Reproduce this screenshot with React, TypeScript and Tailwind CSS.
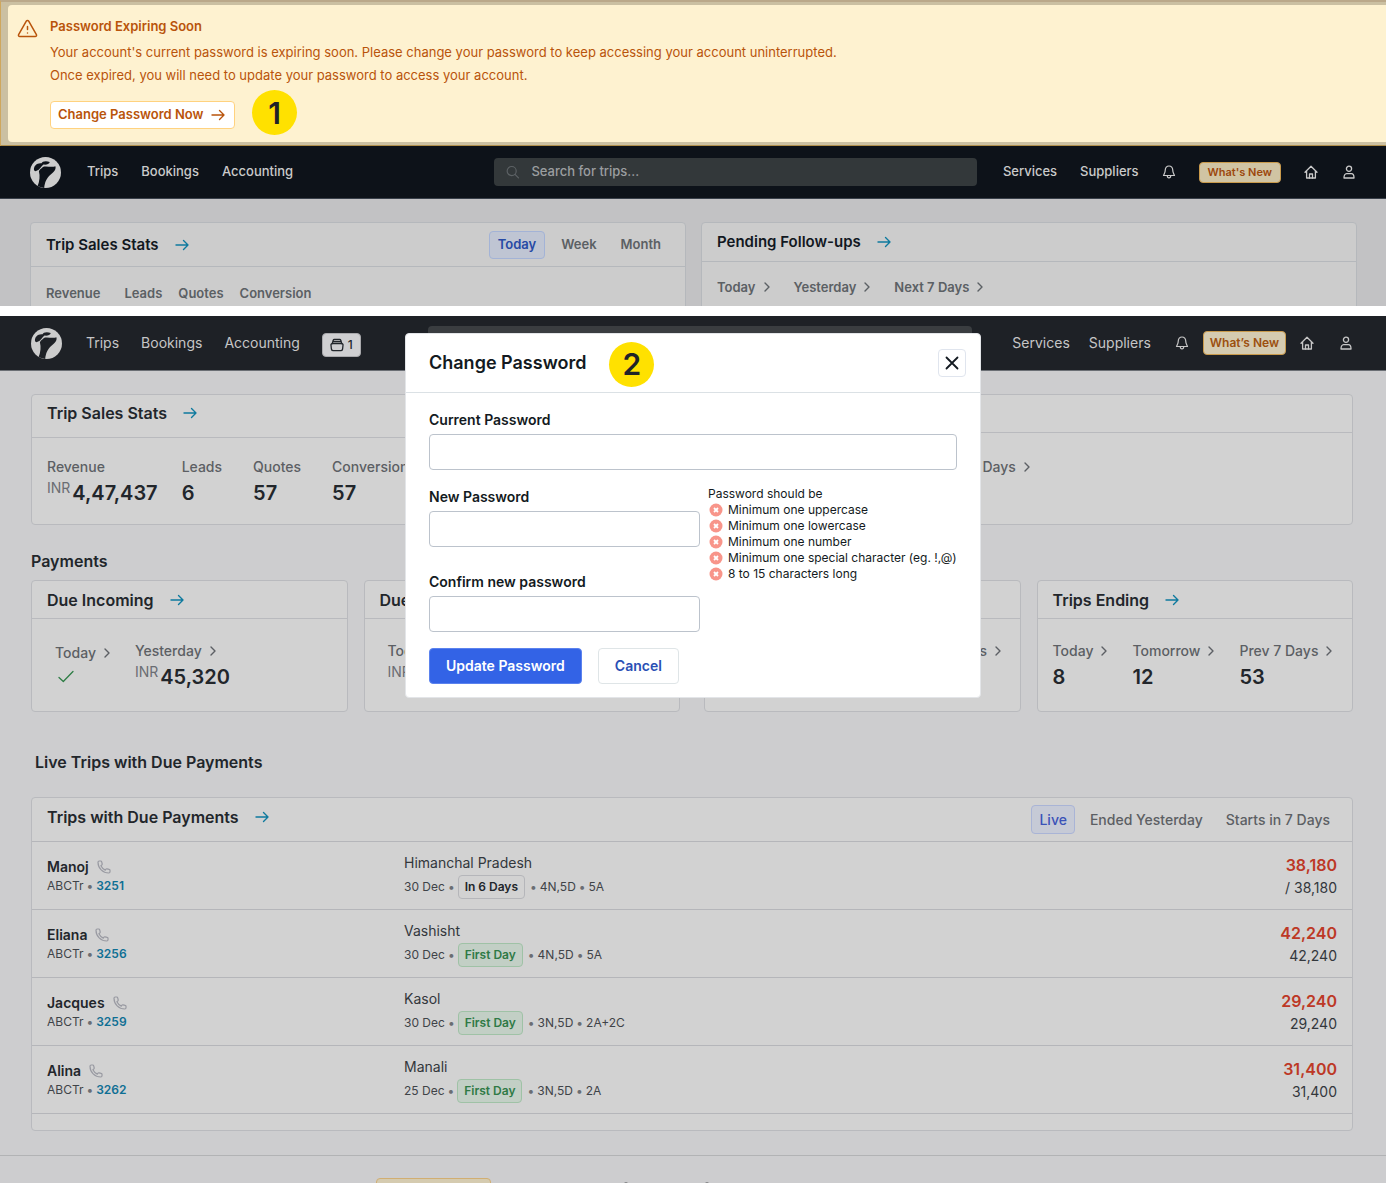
import type { ReactNode } from "react";

function Arrow({ className = "text-[#0e7a9e]" }: { className?: string }) {
  return (
    <svg width="18" height="18" viewBox="0 0 18 18" fill="none" stroke="currentColor" strokeWidth="1.4" strokeLinecap="round" strokeLinejoin="round" className={className} aria-hidden="true">
      <path d="M3 9h12M10.500 4.500 15 9l-4.500 4.500" />
    </svg>
  );
}

function Chevron() {
  return (
    <svg width="10" height="12" viewBox="0 0 10 12" fill="none" stroke="currentColor" strokeWidth="1.4" strokeLinecap="round" strokeLinejoin="round" aria-hidden="true">
      <path d="M3 2l4 4-4 4" />
    </svg>
  );
}

function Logo({ cut }: { cut: string }) {
  return (
    <svg width="31" height="31" viewBox="0 0 94 94" aria-label="Home">
      <circle cx="47" cy="47" r="47" fill="#cccccc" />
      <path fill={cut} d="M12 39C11 26 22 17 35 19C37 13 48 11 60 15C58 22 50 24 41 23C34 28 30 40 17 43C15 43 12 42 12 39Z" />
      <path fill={cut} d="M27 43C30 36 36 34 39 30C50 26 66 33 77 28C80 38 72 45 62 54C50 65 45 76 43 94L23 89C29 72 31 58 27 43Z" />
    </svg>
  );
}

function Bell() {
  return (
    <svg width="14" height="14" viewBox="0 0 14 14" fill="none" stroke="currentColor" strokeWidth="1.2" strokeLinecap="round" strokeLinejoin="round" aria-hidden="true">
      <path d="M7 1C4.700 1 3.300 2.700 3.300 4.800C3.300 7.600 2.300 8.700 1.500 10.500H12.500C11.700 8.700 10.700 7.600 10.700 4.800C10.700 2.700 9.300 1 7 1Z" />
      <path d="M5.300 10.800c0 2.800 3.400 2.800 3.400 0" />
    </svg>
  );
}

function House() {
  return (
    <svg width="14" height="14" viewBox="0 0 14 14" fill="none" stroke="currentColor" strokeWidth="1.3" strokeLinecap="round" strokeLinejoin="round" aria-hidden="true">
      <path d="M1 7.300 7 1.300l6 6M2.600 6v7h8.800V6" />
      <path d="M5.500 13V9h3v4" />
    </svg>
  );
}

function Person() {
  return (
    <svg width="14" height="14" viewBox="0 0 14 14" fill="none" stroke="currentColor" strokeWidth="1.3" strokeLinejoin="round" aria-hidden="true">
      <circle cx="7" cy="3.800" r="2.600" />
      <path d="M4.600 8.600h4.800c1.500 0 2.600 2 2.600 4.400H2c0-2.400 1.100-4.400 2.600-4.400Z" />
    </svg>
  );
}

function Phone() {
  return (
    <svg width="14" height="14" viewBox="0 0 14 14" fill="none" stroke="#999aa2" strokeWidth="1.200" strokeLinejoin="round" aria-hidden="true">
      <path d="M1 2.200C1 1.500 1.500 1 2.200 1H3.700C4.200 1 4.600 1.300 4.700 1.800L5.200 4C5.300 4.400 5.200 4.800 4.800 5L3.900 5.700C4.800 7.600 6.400 9.200 8.300 10.100L9 9.200C9.200 8.800 9.600 8.700 10 8.800L12.200 9.300C12.700 9.400 13 9.800 13 10.300V11.800C13 12.500 12.500 13 11.800 13C5.800 13 1 8.200 1 2.200Z" />
    </svg>
  );
}

function CardTitle({ children, small }: { children: ReactNode; small?: boolean }) {
  return (
    <a href="#" className="flex items-center gap-3.5">
      <h3 className={small ? "text-[15px] leading-6 font-semibold whitespace-nowrap" : "text-base leading-6 font-semibold whitespace-nowrap"}>{children}</h3>
      <Arrow />
    </a>
  );
}

function Period({ label, children, small }: { label: string; children?: ReactNode; small?: boolean }) {
  return (
    <div className="shrink-0">
      <a href="#" className={small ? "flex items-center gap-1.5 text-[13px] leading-5 font-semibold whitespace-nowrap text-[#5b6064]" : "flex items-center gap-1.5 text-sm leading-5 font-medium whitespace-nowrap text-[#5c5f64]"}>
        {label}
        <Chevron />
      </a>
      {children}
    </div>
  );
}

function Figure({ children, currency }: { children: ReactNode; currency?: boolean }) {
  return (
    <div className="flex gap-0.5 whitespace-nowrap text-[#22262b]">
      {currency && <span className="text-sm leading-[22px] font-normal text-[#6a6d73]">INR</span>}
      <span className="text-xl leading-8 font-semibold">{children}</span>
    </div>
  );
}

function Badge({ children }: { children: ReactNode }) {
  return <span className="flex size-[45px] items-center justify-center rounded-full bg-[#ffe100] text-3xl leading-none font-semibold text-[#1f2328]">{children}</span>;
}

function Dot() {
  return <span className="text-[#6a6d73]">•</span>;
}

function PaymentCard({ title, children, inset }: { title: string; children: ReactNode; inset?: boolean }) {
  return (
    <section className="flex h-[132px] min-w-0 flex-1 flex-col overflow-hidden rounded border border-[#b9babe] bg-[#d2d2d2]">
      <header className="flex h-[38px] items-center border-b border-[#b9babe] px-[15px]">
        <CardTitle>{title}</CardTitle>
      </header>
      <div className={inset ? "flex gap-[23px] px-[23px] pt-[22px]" : "flex gap-[23px] px-[15px] pt-[22px]"}>{children}</div>
    </section>
  );
}

function NoticeScreen() {
  return (
    <section className="h-[306px] overflow-hidden bg-[#c2c2c4] text-[#12181f]">
      <div role="alert" className="h-[146px] border-t-2 border-b border-l border-t-[#bba98a] border-b-[#b08f4c] border-l-[#cfa75d] bg-[#cbc0a2] pt-[3px] pl-[7px]">
        <div className="flex h-[137px] gap-3 rounded-l bg-[#fef2d0] pt-[9px] pl-[9px] text-[#b9540b]">
          <svg width="21" height="21" viewBox="0 0 21 21" fill="none" stroke="currentColor" strokeWidth="1.500" strokeLinecap="round" strokeLinejoin="round" className="mt-1 shrink-0" aria-hidden="true">
            <path d="M9.300 3.200 1.600 16.600c-.5.900.1 2 1.200 2h15.400c1.100 0 1.700-1.100 1.200-2L11.700 3.200c-.5-.900-1.900-.900-2.400 0Z" />
            <path d="M10.500 8.500v3M10.500 15v.1" />
          </svg>
          <div>
            <h2 className="text-[13px] leading-6 font-semibold">Password Expiring Soon</h2>
            <p className="mt-[3px] text-[13px] leading-[23px]">
              Your account's current password is expiring soon. Please change your password to keep accessing your account uninterrupted.
              <br />
              Once expired, you will need to update your password to access your account.
            </p>
            <div className="relative mt-3.5 w-fit">
              <button className="flex h-7 items-center gap-1.5 rounded border border-[#ffd27f] bg-white px-[7px] text-[13px] font-semibold whitespace-nowrap">
                Change Password Now
                <Arrow className="text-[#b9540b]" />
              </button>
              <div className="absolute -top-[11px] left-[202px]">
                <Badge>1</Badge>
              </div>
            </div>
          </div>
        </div>
      </div>
      <nav className="flex h-[53px] items-center border-b border-[#39404a] bg-[#0d1219] pr-[30px] pl-[30px] text-[13px] font-medium text-[#cacaca]">
        <Logo cut="#0d1219" />
        <div className="ml-[26px] flex gap-[23px]">
          <a href="#">Trips</a>
          <a href="#">Bookings</a>
          <a href="#">Accounting</a>
        </div>
        <label className="ml-[201px] flex h-7 flex-1 items-center gap-3 rounded bg-[#33383a] px-3">
          <svg width="14" height="14" viewBox="0 0 14 14" fill="none" stroke="#5d6265" strokeWidth="1.200" strokeLinecap="round" aria-hidden="true">
            <circle cx="6" cy="6" r="4.800" />
            <path d="m9.500 9.500 3.700 3.700" />
          </svg>
          <input aria-label="Search for trips" placeholder="Search for trips..." className="w-full bg-transparent outline-none placeholder:text-[#9b9ea0]" />
        </label>
        <div className="ml-[26px] flex items-center">
          <a href="#">Services</a>
          <a href="#" className="ml-[23px]">Suppliers</a>
          <button aria-label="Notifications" className="ml-[23px]"><Bell /></button>
          <button className="ml-[23px] h-[21px] rounded border border-[#c99a4b] bg-[#d0c4a3] px-2 text-[11px] font-semibold whitespace-nowrap text-[#9c470c]">What's New</button>
          <button aria-label="Dashboard" className="ml-[23px]"><House /></button>
          <button aria-label="Account" className="ml-6"><Person /></button>
        </div>
      </nav>
      <main className="grid grid-cols-2 items-start gap-[15px] pt-[23px] pr-[29px] pl-[30px]">
        <section className="h-[120px] rounded border border-[#b5b8bc] bg-[#cccccc]">
          <header className="flex h-11 items-center justify-between border-b border-[#b5b8bc] pr-4 pl-[15px]">
            <CardTitle small>Trip Sales Stats</CardTitle>
            <div className="flex gap-2 text-[13px] font-semibold text-[#5b6064]">
              <button className="h-7 rounded border border-[#a3b3d6] bg-[#bfc5d3] px-2 text-[#274aa5]">Today</button>
              <button className="h-7 px-2">Week</button>
              <button className="h-7 px-2">Month</button>
            </div>
          </header>
          <div className="flex px-[15px] pt-4 text-[13px] leading-5 font-semibold text-[#5b6064]">
            <span>Revenue</span>
            <span className="ml-6">Leads</span>
            <span className="ml-4">Quotes</span>
            <span className="ml-4">Conversion</span>
          </div>
        </section>
        <section className="h-[120px] rounded border border-[#b5b8bc] bg-[#cccccc]">
          <header className="flex h-[39px] items-center border-b border-[#b5b8bc] px-[15px]">
            <CardTitle small>Pending Follow-ups</CardTitle>
          </header>
          <div className="flex gap-[22px] px-[15px] pt-[15px]">
            <Period small label="Today" />
            <Period small label="Yesterday" />
            <Period small label="Next 7 Days" />
          </div>
        </section>
      </main>
    </section>
  );
}

const rules = ["Minimum one uppercase", "Minimum one lowercase", "Minimum one number", "Minimum one special character (eg. !,@)", "8 to 15 characters long"];

const trips = [
  { name: "Manoj", id: "3251", place: "Himanchal Pradesh", date: "30 Dec", status: "In 6 Days", stay: "4N,5D", pax: "5A", due: "38,180", total: "/ 38,180" },
  { name: "Eliana", id: "3256", place: "Vashisht", date: "30 Dec", status: "First Day", stay: "4N,5D", pax: "5A", due: "42,240", total: "42,240" },
  { name: "Jacques", id: "3259", place: "Kasol", date: "30 Dec", status: "First Day", stay: "3N,5D", pax: "2A+2C", due: "29,240", total: "29,240" },
  { name: "Alina", id: "3262", place: "Manali", date: "25 Dec", status: "First Day", stay: "3N,5D", pax: "2A", due: "31,400", total: "31,400" },
];

function PasswordField({ id, label }: { id: string; label: string }) {
  return (
    <div>
      <label htmlFor={id} className="block pt-px text-sm leading-5 font-semibold">{label}</label>
      <input id={id} type="password" className="mt-1 block h-9 w-full rounded border border-[#bcc3cc] px-3 text-sm outline-none" />
    </div>
  );
}

function PasswordDialog() {
  return (
    <div role="dialog" aria-labelledby="dialog-title" className="absolute top-[17px] left-1/2 w-[576px] -translate-x-1/2 rounded border border-[#e3e5e8] bg-white text-[#131a21]">
      <header className="flex h-[59px] items-center border-b border-[#dbe1e5] pr-3.5 pl-[23px]">
        <h2 id="dialog-title" className="text-lg leading-6 font-semibold">Change Password</h2>
        <div className="ml-[23px] pt-0.5"><Badge>2</Badge></div>
        <button aria-label="Close" className="ml-auto flex size-7 items-center justify-center rounded border border-[#e0e5ee]">
          <svg width="14" height="14" viewBox="0 0 14 14" stroke="currentColor" strokeWidth="1.800" strokeLinecap="round" aria-hidden="true">
            <path d="m1.500 1.500 11 11M12.500 1.500l-11 11" />
          </svg>
        </button>
      </header>
      <form className="px-[23px] pt-4 pb-[13px]">
        <PasswordField id="current" label="Current Password" />
        <div className="mt-4 flex gap-2">
          <div className="w-[271px] shrink-0">
            <PasswordField id="new" label="New Password" />
            <div className="mt-6"><PasswordField id="confirm" label="Confirm new password" /></div>
          </div>
          <div className="text-xs leading-4 whitespace-nowrap">
            <p>Password should be</p>
            <ul>
              {rules.map((rule) => (
                <li key={rule} className="flex items-center gap-[5px] pl-px">
                  <svg width="14" height="14" viewBox="0 0 14 14" aria-hidden="true">
                    <circle cx="7" cy="7" r="6.500" fill="#f8958a" />
                    <path d="m5 5 4 4M9 5l-4 4" stroke="#fff" strokeWidth="1.800" />
                  </svg>
                  {rule}
                </li>
              ))}
            </ul>
          </div>
        </div>
        <div className="mt-4 flex gap-4 text-sm font-semibold">
          <button type="button" className="h-9 rounded border border-[#5b82ee] bg-[#3363e6] px-4 text-white">Update Password</button>
          <button type="button" className="h-9 rounded border border-[#dfe5e7] px-4 text-[#2a50b5]">Cancel</button>
        </div>
      </form>
    </div>
  );
}

function DialogScreen() {
  return (
    <section className="relative overflow-hidden bg-[#cdcdcf] text-[#22262b]">
      <nav className="flex h-[55px] items-center border-b border-[#6b6f75] bg-[#1e2126] pr-[33px] pl-[31px] text-sm text-[#c6c6c6]">
        <Logo cut="#1e2126" />
        <div className="ml-6 flex items-center gap-[22px]">
          <a href="#">Trips</a>
          <a href="#">Bookings</a>
          <a href="#">Accounting</a>
          <button aria-label="Saved trips, 1" className="mt-[3px] flex h-6 items-center gap-1 rounded border border-[#a9a9ac] bg-[#cfcfd1] px-[7px] text-xs font-medium text-[#22262b]">
            <svg width="14" height="14" viewBox="0 0 14 14" fill="none" stroke="currentColor" strokeWidth="1.300" strokeLinecap="round" strokeLinejoin="round" aria-hidden="true">
              <path d="M2.300 5.500 3.200 2.200c.2-.6.500-.9 1.100-.9h5.400c.6 0 .9.300 1.100.9l.9 3.300M3 3.500h8" />
              <path d="M2.600 5.500h8.800c1 0 1.800.8 1.600 1.800l-.4 3.700c-.2 1-.9 1.700-1.900 1.700H3.300c-1 0-1.700-.7-1.900-1.700L1 7.300c-.2-1 .6-1.800 1.600-1.800Z" />
            </svg>
            1
          </button>
        </div>
        <div className="ml-[67px] h-[34px] flex-1 rounded bg-[#3a3d40]" />
        <div className="ml-10 flex items-center">
          <a href="#">Services</a>
          <a href="#" className="ml-[19px]">Suppliers</a>
          <button aria-label="Notifications" className="ml-[24px]"><Bell /></button>
          <button className="ml-3.5 h-6 rounded border border-[#c99a4b] bg-[#d5cbb0] px-1.5 text-xs font-semibold whitespace-nowrap text-[#9c500f]">What’s New</button>
          <button aria-label="Dashboard" className="ml-3.5"><House /></button>
          <button aria-label="Account" className="ml-[25px]"><Person /></button>
        </div>
      </nav>
      <main className="pr-[33px] pl-[31px]">
        <div className="grid grid-cols-2 gap-6 pt-[23px]">
          <section className="h-[131px] rounded border border-[#b9babe] bg-[#d2d2d2]">
            <header className="flex h-[43px] items-center border-b border-[#b9babe] px-[15px] pb-1.5">
              <CardTitle>Trip Sales Stats</CardTitle>
            </header>
            <div className="flex px-[15px] pt-[19px] text-sm leading-5 font-medium text-[#5c5f64]">
              <div>Revenue<Figure currency>4,47,437</Figure></div>
              <div className="ml-6">Leads<Figure>6</Figure></div>
              <div className="ml-[31px]">Quotes<Figure>57</Figure></div>
              <div className="ml-[31px]">Conversion<Figure>57</Figure></div>
            </div>
          </section>
          <section className="h-[131px] rounded border border-[#b9babe] bg-[#d2d2d2]">
            <header className="flex h-[38px] items-center border-b border-[#b9babe] px-[15px]">
              <CardTitle>Pending Follow-ups</CardTitle>
            </header>
            <div className="flex gap-[38px] px-[15px] pt-6">
              <Period label="Today" />
              <Period label="Yesterday" />
              <Period label="Next 7 Days" />
            </div>
          </section>
        </div>
        <h2 className="mt-6 text-base leading-6 font-semibold">Payments</h2>
        <div className="mt-[7px] grid grid-cols-2 gap-6">
          <div className="flex gap-4">
            <PaymentCard title="Due Incoming" inset>
              <div className="pt-0.5">
                <Period label="Today">
                  <svg width="16" height="14" viewBox="0 0 16 14" fill="none" stroke="#2e7d45" strokeWidth="1.300" strokeLinecap="round" strokeLinejoin="round" className="mt-[7px] ml-[3px]" aria-hidden="true">
                    <path d="m1 7.500 4.300 4L15 1.500" />
                  </svg>
                </Period>
              </div>
              <Period label="Yesterday"><Figure currency>45,320</Figure></Period>
            </PaymentCard>
            <PaymentCard title="Due Outgoing" inset>
              <Period label="Today"><Figure currency>0</Figure></Period>
            </PaymentCard>
          </div>
          <div className="flex gap-4">
            <PaymentCard title="Trips Starting">
              <Period label="Today" />
              <Period label="Tomorrow" />
              <Period label="Next 7 Days" />
            </PaymentCard>
            <PaymentCard title="Trips Ending">
              <Period label="Today"><Figure>8</Figure></Period>
              <Period label="Tomorrow"><Figure>12</Figure></Period>
              <Period label="Prev 7 Days"><Figure>53</Figure></Period>
            </PaymentCard>
          </div>
        </div>
        <h2 className="mt-[38px] pl-1 text-base leading-6 font-semibold">Live Trips with Due Payments</h2>
        <section className="mt-[23px] rounded border border-[#b9babe] bg-[#d2d2d2] pb-4">
          <header className="flex h-11 items-center justify-between border-b border-[#b5b6ba] pr-3.5 pl-[15px]">
            <div className="pb-1.5"><CardTitle>Trips with Due Payments</CardTitle></div>
            <div className="flex gap-[7px] text-sm font-medium text-[#5c5f64]">
              <button className="h-[29px] rounded border border-[#a9b4d6] bg-[#c6cad6] px-[7px] text-[#3a52b8]">Live</button>
              <button className="h-[29px] px-2">Ended Yesterday</button>
              <button className="h-[29px] px-2">Starts in 7 Days</button>
            </div>
          </header>
          <table className="w-full table-fixed border-separate border-spacing-0">
            <tbody>
              {trips.map((trip) => (
                <tr key={trip.id} className="h-[68px]">
                  <td className="w-[372px] border-b border-[#b5b6ba] pl-[15px]">
                    <div className="flex items-center gap-2 text-sm leading-5 font-semibold">
                      {trip.name}
                      <Phone />
                    </div>
                    <div className="flex gap-[3px] text-xs leading-[18px] text-[#3f4348]">
                      <span>ABCTr</span>
                      <Dot />
                      <a href="#" className="font-semibold text-[#0f6f94]">{trip.id}</a>
                    </div>
                  </td>
                  <td className="border-b border-[#b5b6ba]">
                    <div className="text-sm leading-5 text-[#33373c]">{trip.place}</div>
                    <div className="mt-0.5 flex items-center gap-[3px] text-xs text-[#3f4348]">
                      <span>{trip.date}</span>
                      <Dot />
                      <span className={trip.status === "First Day" ? "mr-0.5 flex h-6 items-center rounded border border-[#9fc2a6] bg-[#c2cfc5] px-1.5 font-semibold text-[#2f7a45]" : "mr-0.5 flex h-6 items-center rounded border border-[#b5b6ba] px-1.5 font-semibold text-[#22262b]"}>{trip.status}</span>
                      <Dot />
                      <span>{trip.stay}</span>
                      <Dot />
                      <span>{trip.pax}</span>
                    </div>
                  </td>
                  <td className="w-[200px] border-b border-[#b5b6ba] pr-[15px] text-right">
                    <div className="text-base leading-6 font-semibold text-[#bd3826]">{trip.due}</div>
                    <div className="text-sm leading-[22px] text-[#33373c]">{trip.total}</div>
                  </td>
                </tr>
              ))}
            </tbody>
          </table>
        </section>
      </main>
      <footer className="mt-6 flex h-[29px] items-start overflow-hidden border-t border-[#b2b3b5] pt-[22px] pl-[376px]">
        <div className="h-8 w-[115px] shrink-0 rounded border border-[#d1ae72] bg-[#d5cbb0]" />
        <span className="mt-1 ml-[133px] h-1 w-1 rounded-full bg-[#808184]" />
        <span className="mt-1 ml-[77px] h-1 w-1 rounded-full bg-[#808184]" />
      </footer>
      <PasswordDialog />
    </section>
  );
}

export default function App() {
  return (
    <div className="flex flex-col gap-[10px] bg-white font-['Inter',sans-serif]">
      <NoticeScreen />
      <DialogScreen />
    </div>
  );
}
